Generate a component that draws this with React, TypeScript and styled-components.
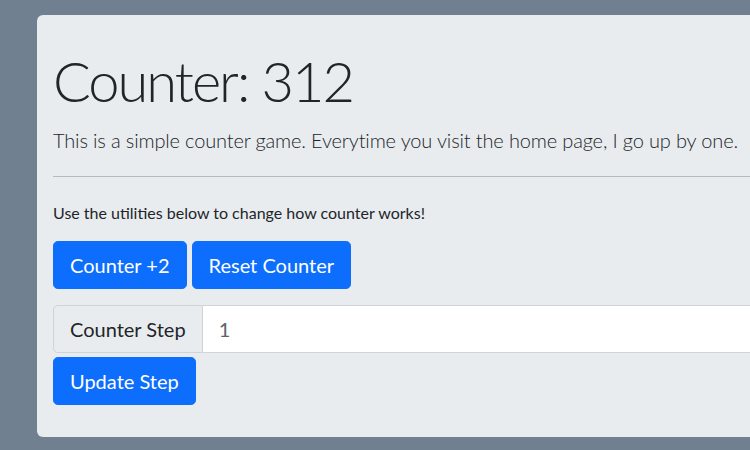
import React from "react";
import styled, { createGlobalStyle } from "styled-components";

const Global = createGlobalStyle`
  html, body {
    margin: 0;
    padding: 0;
    background: #708090;
    overflow: hidden;
  }
  body {
    font-family: Lato, "Open Sans", sans-serif;
    color: #212529;
  }
`;

const Page = styled.div`
  padding: 15px 0 0 37px;
`;

const Jumbo = styled.div`
  width: 900px;
  background: #e9ecef;
  border-radius: 6px;
  padding: 32px 16px;
  box-sizing: border-box;
`;

const Title = styled.h1`
  margin: 0 0 11px;
  font-size: 56px;
  font-weight: 300;
  line-height: 1.2;
  letter-spacing: -2px;
  color: #212529;
`;

const Lead = styled.p`
  margin: 0;
  font-size: 20px;
  font-weight: 300;
  line-height: 1.5;
  letter-spacing: -0.15px;
  color: #212529;
`;

const Rule = styled.hr`
  margin: 21px 0 24px;
  border: 0;
  border-top: 1px solid #b8bbbe;
  width: 100%;
`;

const Note = styled.p`
  margin: 0 0 16px;
  font-size: 16px;
  line-height: 1.5;
`;

const ButtonRow = styled.div`
  display: flex;
  gap: 5px;
  margin-bottom: 16px;
`;

const Button = styled.button`
  font-family: inherit;
  font-size: 20px;
  line-height: 1.5;
  padding: 8px 16px;
  color: #fff;
  background: #0d6efd;
  border: 1px solid #0d6efd;
  border-radius: 4.8px;
  cursor: pointer;
`;

const InputGroup = styled.div`
  display: flex;
  width: 100%;
  margin-bottom: 4px;
`;

const Addon = styled.span`
  display: flex;
  align-items: center;
  font-size: 20px;
  line-height: 1.5;
  padding: 8px 16px;
  background: #e9ecef;
  border: 1px solid #ced4da;
  border-radius: 4.8px 0 0 4.8px;
  color: #212529;
  white-space: nowrap;
`;

const Input = styled.input`
  flex: 1;
  font-family: inherit;
  font-size: 20px;
  line-height: 1.5;
  padding: 8px 16px;
  border: 1px solid #ced4da;
  border-left: 0;
  border-radius: 0 4.8px 4.8px 0;
  background: #fff;
  color: #5c636a;
  outline: none;
`;

export default function App() {
  return (
    <>
      <Global />
      <Page>
        <Jumbo>
          <Title>Counter: 312</Title>
          <Lead>
            This is a simple counter game. Everytime you visit the home page, I go up by one.
          </Lead>
          <Rule />
          <Note>Use the utilities below to change how counter works!</Note>
          <ButtonRow>
            <Button>Counter +2</Button>
            <Button>Reset Counter</Button>
          </ButtonRow>
          <InputGroup>
            <Addon>Counter Step</Addon>
            <Input defaultValue="1" />
          </InputGroup>
          <Button>Update Step</Button>
        </Jumbo>
      </Page>
    </>
  );
}
